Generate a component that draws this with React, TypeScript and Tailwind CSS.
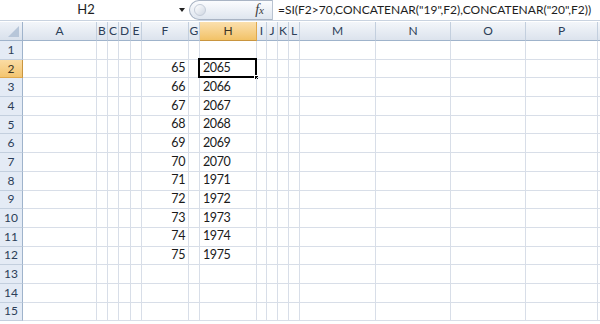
import React from "react";

const columns = [
  { name: "A", w: "74" },
  { name: "B" },
  { name: "C" },
  { name: "D" },
  { name: "E" },
  { name: "F" },
  { name: "G" },
  { name: "H" },
  { name: "I" },
  { name: "J" },
  { name: "K" },
  { name: "L" },
  { name: "M" },
  { name: "N" },
  { name: "O" },
  { name: "P" },
  { name: "" },
];

const fValues: Record<number, string> = {
  2: "65", 3: "66", 4: "67", 5: "68", 6: "69", 7: "70",
  8: "71", 9: "72", 10: "73", 11: "74", 12: "75",
};

const hValues: Record<number, string> = {
  2: "2065", 3: "2066", 4: "2067", 5: "2068", 6: "2069", 7: "2070",
  8: "1971", 9: "1972", 10: "1973", 11: "1974", 12: "1975",
};

const rows = Array.from({ length: 15 }, (_, i) => i + 1);

function FormulaBar() {
  return (
    <div className="flex h-[21px] items-stretch border-b border-[#c9d3e0] bg-white">
      <div className="flex w-[172px] items-center justify-center text-[13px] text-[#1e1e1e]">
        H2
      </div>
      <div className="flex w-[17px] items-center justify-start pl-[7px]">
        <span className="block h-0 w-0 border-x-[3.5px] border-t-[4px] border-x-transparent border-t-[#222]" />
      </div>
      <div className="relative flex w-[83px] items-center justify-end rounded-l-full border border-r-0 border-[#a9b4c4] bg-gradient-to-b from-[#fbfcfe] to-[#dfe6ef] pr-[8px]">
        <span className="absolute left-[4px] top-[3px] h-[12px] w-[12px] rounded-full border border-[#c4ccd8] bg-gradient-to-br from-[#ffffff] to-[#cfd7e2]" />
        <span className="font-['Liberation_Serif',serif] text-[14px] italic leading-none text-[#3a3a3a]">
          f<span className="text-[11px]">x</span>
        </span>
      </div>
      <div className="w-px bg-[#b9c3d1]" />
      <div className="flex flex-1 items-center overflow-hidden whitespace-nowrap pl-[5px] text-[12px] text-[#1e1e1e]">
        =SI(F2&gt;70,CONCATENAR("19",F2),CONCATENAR("20",F2))
      </div>
    </div>
  );
}

function CornerCell() {
  return (
    <div className="relative border-r border-b border-[#9fb3cb] bg-gradient-to-b from-[#eef2f8] to-[#d9e1ec]">
      <svg className="absolute bottom-[3px] right-[3px]" width="11" height="11" viewBox="0 0 11 11">
        <polygon points="11,0 11,11 0,11" fill="#b7c6d9" />
      </svg>
    </div>
  );
}

export default function App() {
  return (
    <div className="h-[324px] w-[600px] overflow-hidden bg-white font-['Lato',sans-serif]">
      <FormulaBar />
      <div className="grid grid-cols-[23px_74px_11px_11px_12px_11px_47px_11px_57px_10px_11px_11px_11px_76px_75px_75px_72px_40px] grid-rows-[19px_repeat(15,18.7px)] pt-px">
        <CornerCell />
        {columns.map((c) => {
          const selected = c.name === "H";
          return (
            <div
              key={"h" + c.name}
              className={
                "flex items-center justify-center border-r border-b text-[12px] " +
                (selected
                  ? "border-[#e0a94e] border-b-[#c9953f] bg-gradient-to-b from-[#fbe0ad] to-[#f2c266] text-[#3d3524]"
                  : "border-r-[#c3cfde] border-b-[#9fb3cb] bg-gradient-to-b from-[#f3f6fa] to-[#dce3ed] text-[#2c3e58]")
              }
            >
              {c.name}
            </div>
          );
        })}
        {rows.map((r) => (
          <React.Fragment key={r}>
            <div
              className={
                "flex items-center justify-center border-r border-b text-[12px] " +
                (r === 2
                  ? "border-r-[#c9953f] border-b-[#e0a94e] bg-gradient-to-b from-[#fbdca3] to-[#f3c570] text-[#3d3524]"
                  : "border-r-[#9fb3cb] border-b-[#c3cfde] bg-[#e4ebf5] text-[#2c3e58]")
              }
            >
              {r}
            </div>
            {columns.map((c) => {
              let content: React.ReactNode = null;
              let align = "";
              if (c.name === "F" && fValues[r]) {
                content = fValues[r];
                align = "justify-end pr-[3px]";
              }
              if (c.name === "H" && hValues[r]) {
                content = hValues[r];
                align = "justify-start pl-[3px]";
              }
              const active = c.name === "H" && r === 2;
              return (
                <div
                  key={c.name + r}
                  className={
                    "relative flex items-center border-r border-b border-[#d8dee8] text-[12.5px] tracking-[-0.4px] text-[#1a1a1a] " +
                    align
                  }
                >
                  {content}
                  {active && (
                    <>
                      <span className="absolute -left-[2px] -top-[2px] -right-[1px] -bottom-[1px] border-2 border-black" />
                      <span className="absolute -bottom-[3px] -right-[3px] h-[5px] w-[5px] border border-white bg-black" />
                    </>
                  )}
                </div>
              );
            })}
          </React.Fragment>
        ))}
      </div>
    </div>
  );
}
